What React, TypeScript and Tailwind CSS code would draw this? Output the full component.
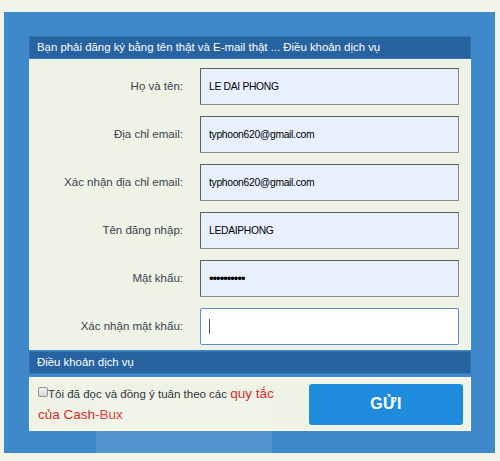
import React from 'react';

const fields = [
  { label: 'Họ và tên:', value: 'LE DAI PHONG' },
  { label: 'Địa chỉ email:', value: 'typhoon620@gmail.com' },
  { label: 'Xác nhận địa chỉ email:', value: 'typhoon620@gmail.com' },
  { label: 'Tên đăng nhập:', value: 'LEDAIPHONG' },
  { label: 'Mật khẩu:', value: '••••••••••', password: true },
];

const App = () => {
  return (
    <div
      className="relative min-h-[461px] w-[500px] overflow-hidden bg-[#f0f3e7] pt-[12px] pl-[4px]"
      style={{ fontFamily: '"Liberation Sans", Arial, sans-serif' }}
    >
      <div className="w-[491px] h-[441px] bg-[#3f88c9] pt-[24px] pl-[25px]">
        <div className="w-[442px]">
          <div className="h-[23px] bg-[#2863a1] border border-[#3574b5] flex items-center pl-[7px] text-[11.4px] text-white">
            Bạn phải đăng ký bằng tên thật và E-mail thật ... Điều khoản dịch vụ
          </div>

          <div className="bg-[#eff3e6] border-r border-[#f7f9f2] pt-[9px] pb-[5px] flex flex-col gap-[11px]">
            {fields.map((f) => (
              <div key={f.label} className="flex items-center">
                <div className="w-[154px] text-right text-[11.5px] text-[#3b4150]">{f.label}</div>
                <div className="ml-[17px] w-[259px] h-[37px] bg-[#e8f0fe] border border-[#5f5f5f] border-b-[#8a8a8a] border-r-[#8a8a8a] flex items-center pl-[8px] text-[10.3px] tracking-[-0.3px] text-black">
                  {f.password ? (
                    <span className="tracking-[-1px] text-[13px] leading-none">{f.value}</span>
                  ) : (
                    f.value
                  )}
                </div>
              </div>
            ))}
            <div className="flex items-center">
              <div className="w-[154px] text-right text-[11.5px] text-[#3b4150]">Xác nhận mật khẩu:</div>
              <div className="ml-[17px] w-[259px] h-[37px] bg-white border border-[#5b8bd1] rounded-[2px] flex items-center pl-[8px]">
                <span className="w-px h-[15px] bg-[#555]" />
              </div>
            </div>
          </div>

          <div className="mt-[1px] h-[23px] bg-[#2863a1] border border-[#3574b5] flex items-center pl-[7px] text-[11.4px] text-white">
            Điều khoản dịch vụ
          </div>

          <div className="mt-[3px] h-[54px] bg-[#eff3e6] border border-[#fafbf6] flex items-center">
            <div className="w-[250px] mr-[28px] pl-[8px] leading-[20px]">
              <span className="inline-block align-[1px] w-[10px] h-[10px] rounded-[2px] border border-[#8f8f8f] bg-gradient-to-b from-[#f4f4f4] to-[#d8d8d8]" />
              <span className="text-[11.5px] text-[#2f3440]">Tôi đã đọc và đồng ý tuân theo các </span>
              <span className="text-[13.5px] text-[#d42b2b]">quy tắc của Cash-Bux</span>
            </div>
            <button className="ml-[1px] w-[154px] h-[41px] rounded-[3px] bg-[#1f8bdc] text-white text-[16px] font-bold tracking-[0.5px]">
              GỬI
            </button>
          </div>
        </div>
      </div>

      {/* faded screenshot watermark */}
      <div className="absolute left-[96px] top-[398px] w-[176px] h-[70px] bg-white/10 pointer-events-none" />
    </div>
  );
};

export default App;
